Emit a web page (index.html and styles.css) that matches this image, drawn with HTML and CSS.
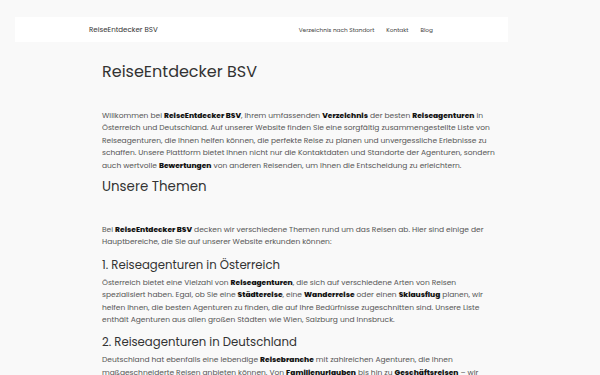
FILE: index.html
```html
<!DOCTYPE html>
<html lang="de">
<head>
    <meta charset="UTF-8">
    <meta name="viewport" content="width=device-width, initial-scale=1.0">
    <title>ReiseEntdecker BSV</title>
    <link rel="stylesheet" href="styles.css">
</head>
<body>
    <header class="site-header">
        <div class="header-inner">
            <a href="#" class="site-title">ReiseEntdecker BSV</a>
            <nav class="main-nav">
                <a href="#">Verzeichnis nach Standort</a>
                <a href="#">Kontakt</a>
                <a href="#">Blog</a>
            </nav>
        </div>
    </header>

    <main class="content">
        <h1>ReiseEntdecker BSV</h1>
        <p>Willkommen bei <strong>ReiseEntdecker BSV</strong>, Ihrem umfassenden <strong>Verzeichnis</strong> der besten <strong>Reiseagenturen</strong> in Österreich und Deutschland. Auf unserer Website finden Sie eine sorgfältig zusammengestellte Liste von Reiseagenturen, die Ihnen helfen können, die perfekte Reise zu planen und unvergessliche Erlebnisse zu schaffen. Unsere Plattform bietet Ihnen nicht nur die Kontaktdaten und Standorte der Agenturen, sondern auch wertvolle <strong>Bewertungen</strong> von anderen Reisenden, um Ihnen die Entscheidung zu erleichtern.</p>

        <h2>Unsere Themen</h2>
        <p>Bei <strong>ReiseEntdecker BSV</strong> decken wir verschiedene Themen rund um das Reisen ab. Hier sind einige der Hauptbereiche, die Sie auf unserer Website erkunden können:</p>

        <h3>1. Reiseagenturen in Österreich</h3>
        <p>Österreich bietet eine Vielzahl von <strong>Reiseagenturen</strong>, die sich auf verschiedene Arten von Reisen spezialisiert haben. Egal, ob Sie eine <strong>Städtereise</strong>, eine <strong>Wanderreise</strong> oder einen <strong>Skiausflug</strong> planen, wir helfen Ihnen, die besten Agenturen zu finden, die auf Ihre Bedürfnisse zugeschnitten sind. Unsere Liste enthält Agenturen aus allen großen Städten wie Wien, Salzburg und Innsbruck.</p>

        <h3>2. Reiseagenturen in Deutschland</h3>
        <p>Deutschland hat ebenfalls eine lebendige <strong>Reisebranche</strong> mit zahlreichen Agenturen, die Ihnen maßgeschneiderte Reisen anbieten können. Von <strong>Familienurlauben</strong> bis hin zu <strong>Geschäftsreisen</strong> – wir unterstützen Sie dabei, die passende Agentur für Ihre Bedürfnisse zu finden.</p>
    </main>
</body>
</html>
```

FILE: styles.css
```css
/* Grundstile */
* {
    margin: 0;
    padding: 0;
    box-sizing: border-box;
}

body {
    background-color: #f9f9f9;
    color: #555;
    font-family: 'Poppins', 'Open Sans', 'DejaVu Sans', sans-serif;
    font-size: 7.5px;
    line-height: 12.4px;
    padding-top: 17px;
}

a {
    text-decoration: none;
}

/* Kopfzeile */
.site-header {
    width: 493px;
    margin-left: 15px;
    background-color: #fff;
}

.header-inner {
    height: 25px;
    padding: 0 75px 0 74px;
    display: flex;
    justify-content: space-between;
    align-items: center;
}

.site-title {
    color: #333;
    font-size: 7.1px;
    line-height: 10px;
    margin-top: 1px;
}

.main-nav {
    display: flex;
    gap: 12px;
}

.main-nav a {
    color: #444;
    font-size: 5.8px;
    line-height: 10px;
}

/* Inhalt */
.content {
    width: 396px;
    margin: 0 auto;
}

h1,
h2,
h3 {
    color: #333;
    font-weight: 400;
}

h1 {
    font-size: 16px;
    line-height: 20px;
    margin: 20px 0 28px;
}

h2 {
    font-size: 13.4px;
    line-height: 18px;
    margin: 6px 0 28px;
}

h3 {
    font-size: 11.7px;
    line-height: 16px;
    margin: 8px 0 4px;
}

strong {
    color: #111;
    font-weight: 800;
}
```
